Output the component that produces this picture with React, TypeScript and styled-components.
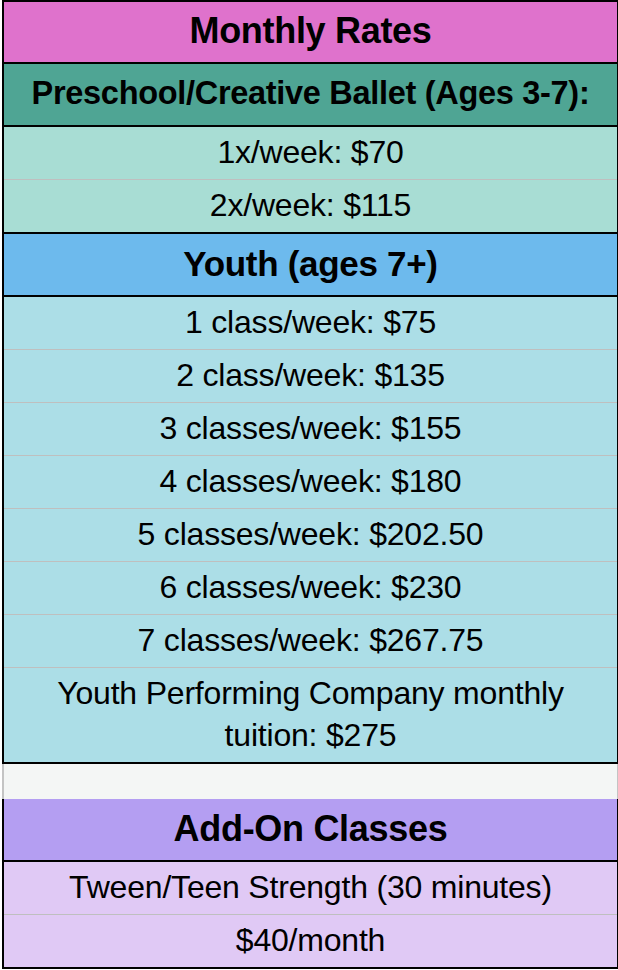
import React from 'react';
import styled, { createGlobalStyle } from 'styled-components';

const GlobalStyle = createGlobalStyle`
  html, body {
    margin: 0;
    padding: 0;
    background: #ffffff;
  }
  body {
    font-family: "Liberation Sans", Arial, sans-serif;
    color: #000;
  }
`;

type Tone = 'pink' | 'teal' | 'blue' | 'purple';

const palette: Record<Tone, { head: string; cell: string }> = {
  pink: { head: '#df72cc', cell: '#df72cc' },
  teal: { head: '#4fa594', cell: '#a8ddd4' },
  blue: { head: '#6dbaed', cell: '#acdee7' },
  purple: { head: '#b49ef2', cell: '#e0c9f5' },
};

const groups: { title: string; tone: Tone; size?: number; rows: string[] }[] = [
  { title: 'Monthly Rates', tone: 'pink', rows: [] },
  {
    title: 'Preschool/Creative Ballet (Ages 3-7):',
    tone: 'teal',
    size: 32.5,
    rows: ['1x/week: $70', '2x/week: $115'],
  },
  {
    title: 'Youth (ages 7+)',
    tone: 'blue',
    size: 35,
    rows: [
      '1 class/week: $75',
      '2 class/week: $135',
      '3 classes/week: $155',
      '4 classes/week: $180',
      '5 classes/week: $202.50',
      '6 classes/week: $230',
      '7 classes/week: $267.75',
      'Youth Performing Company monthly tuition: $275',
    ],
  },
  { title: 'Add-On Classes', tone: 'purple', rows: ['Tween/Teen Strength (30 minutes)', '$40/month'] },
];

const Page = styled.div`
  padding-left: 2px;
  width: 616px;
`;

const Sheet = styled.div`
  border-top: 2px solid #000;
`;

const Group = styled.section`
  border-left: 2px solid #000;
  border-right: 1px solid #000;
  border-bottom: 2px solid #000;
`;

const Header = styled.div<{ $bg: string; $size: number; $first: boolean }>`
  background: ${(p) => p.$bg};
  height: ${(p) => (p.$first ? 60 : 61)}px;
  display: flex;
  align-items: center;
  justify-content: center;
  font-weight: 700;
  font-size: ${(p) => p.$size}px;
  letter-spacing: -0.3px;
  padding-bottom: 2px;
  box-sizing: border-box;
  & + div {
    border-top: 2px solid #000;
  }
`;

const Cell = styled.div<{ $bg: string }>`
  background: ${(p) => p.$bg};
  min-height: 52px;
  box-sizing: border-box;
  padding: 4px 40px 6px;
  display: flex;
  align-items: center;
  justify-content: center;
  text-align: center;
  font-size: 32px;
  line-height: 42px;
  letter-spacing: -0.2px;
  & + & {
    border-top: 1px solid #bfbfbf;
  }
`;

const Spacer = styled.div`
  height: 35px;
  background: #f4f6f5;
  border-left: 2px solid #c4c4c4;
  border-right: 1px solid #c4c4c4;
  border-bottom: 2px solid #000;
  margin-bottom: -2px;
`;

const App: React.FC = () => {
  return (
    <Page>
      <GlobalStyle />
      <Sheet>
        {groups.map((g, i) => (
          <React.Fragment key={g.title}>
            {g.tone === 'purple' && <Spacer />}
            <Group>
              <Header $bg={palette[g.tone].head} $size={g.size ?? 36} $first={i === 0}>
                {g.title}
              </Header>
              {g.rows.map((r) => (
                <Cell key={r} $bg={palette[g.tone].cell}>
                  {r}
                </Cell>
              ))}
            </Group>
          </React.Fragment>
        ))}
      </Sheet>
    </Page>
  );
};

export default App;
